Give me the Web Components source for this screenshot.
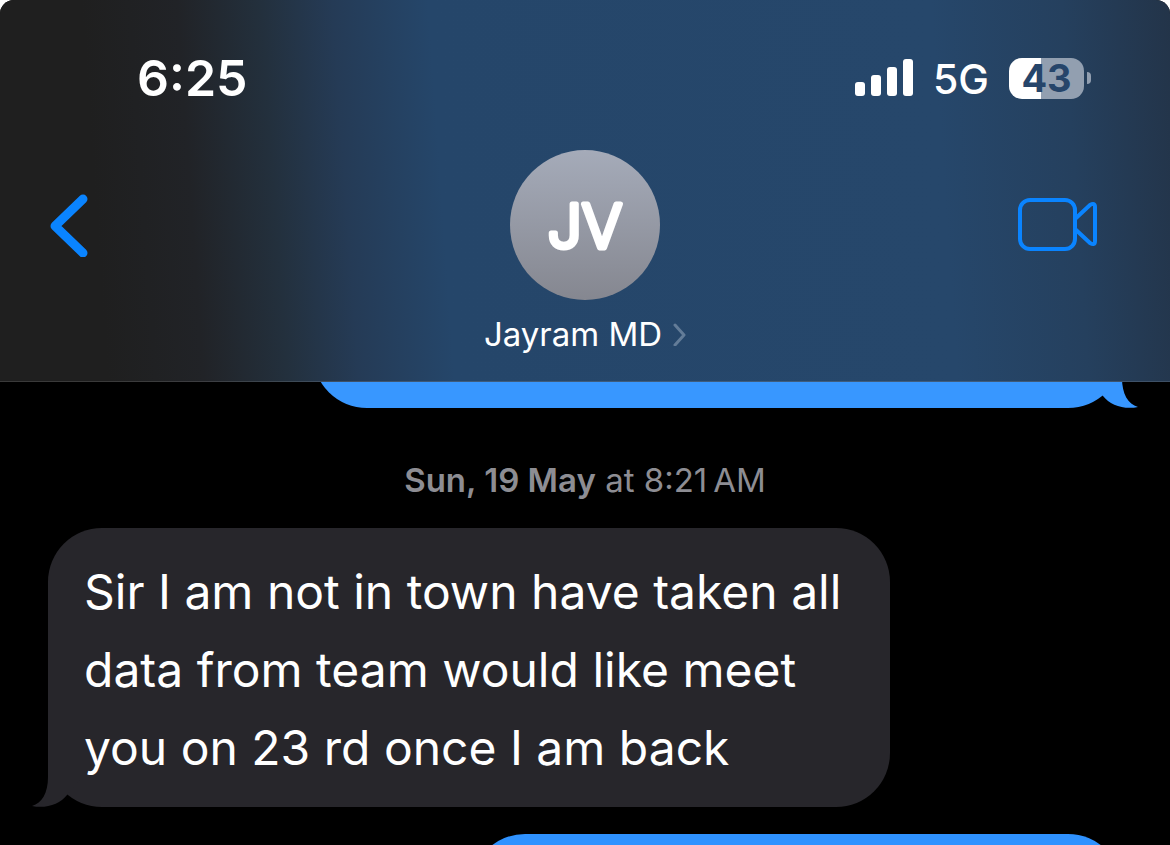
<!DOCTYPE html>
<html lang="en">
<head>
<meta charset="utf-8">
<meta name="viewport" content="width=device-width, initial-scale=1">
<title>Messages</title>
<style>
  body {
    margin: 0;
    background: white;
    font-family: Inter, "Liberation Sans", sans-serif;
    color: white;
  }
</style>
</head>
<body>
<chat-screen>
  <chat-header slot="header">
    <status-bar time="6:25" network="5G" battery="43"></status-bar>
    <contact-bar initials="JV" name="Jayram MD"></contact-bar>
  </chat-header>
  <chat-bubble class="first" kind="sent"></chat-bubble>
  <date-stamp><b>Sun, 19 May</b> at 8:21&#8239;AM</date-stamp>
  <chat-bubble kind="received">Sir I am not in town have taken all data from team would like meet you on 23 rd once I am back</chat-bubble>
  <chat-bubble class="last" kind="sent"></chat-bubble>
</chat-screen>

<script>
class ChatScreen extends HTMLElement {
  constructor() {
    super();
    this.attachShadow({ mode: 'open' });
    this.shadowRoot.innerHTML = `
      <style>
        :host {
          display: flex;
          flex-direction: column;
          height: 100vh;
          overflow: hidden;
          border-radius: 14px 14px 0 0;
          background: black;
        }

        .thread {
          display: flex;
          flex-direction: column;
          flex: 1;
          min-height: 0;
          padding: 0 48px;
        }

        ::slotted(chat-bubble) {
          flex-shrink: 0;
          box-sizing: border-box;
        }

        /* scrolled halfway under the header */
        ::slotted(.first) {
          width: 809px;
          height: 120px;
          margin-top: -94px;
          --sent: #3897ff;
        }

        ::slotted(date-stamp) { margin: 50px 0 26px; }

        ::slotted(.last) {
          width: 651px;
          height: 120px;
          margin-top: 27px;
        }
      </style>
      <slot name="header"></slot>
      <main class="thread"><slot></slot></main>
    `;
  }
}

class ChatHeader extends HTMLElement {
  constructor() {
    super();
    this.attachShadow({ mode: 'open' });
    this.shadowRoot.innerHTML = `
      <style>
        :host {
          display: block;
          position: relative;
          z-index: 1;
          flex-shrink: 0;
          padding-bottom: 25px;
          border-bottom: 1px solid rgba(255, 255, 255, .12);
          background: linear-gradient(86deg, #1f1f1f 9%, #212327 17%, #23303d 24%, #253b56 30%, #25466a 38%, #26476b 80%, #25405e 91%, #233449 100%);
          background-origin: border-box;
        }
      </style>
      <slot></slot>
    `;
  }
}

class StatusBar extends HTMLElement {
  constructor() {
    super();
    this.attachShadow({ mode: 'open' });
    this.shadowRoot.innerHTML = `
      <style>
        :host {
          display: flex;
          align-items: center;
          justify-content: space-between;
          padding: 48px 79px 0 137px;
          height: 60px;
        }

        .time {
          font-size: 50px;
          font-weight: 600;
        }

        .right {
          display: flex;
          align-items: center;
          gap: 20px;
        }

        .network {
          font-size: 41px;
          font-weight: 500;
          line-height: 60px;
          padding-top: 2px;
        }

        .battery {
          display: flex;
          align-items: center;
          gap: 3px;
        }

        .level {
          width: 75px;
          border-radius: 13px;
          background: linear-gradient(90deg, white 32px, #929fb0 32px);
          color: #26456a;
          font-size: 38px;
          font-weight: 700;
          line-height: 41px;
          text-align: center;
        }

        .nub {
          width: 4px;
          height: 12px;
          border-radius: 0 6px 6px 0;
          background: #929fb0;
        }
      </style>
      <span class="time"></span>
      <div class="right">
        <svg width="58" height="40" viewBox="0 0 58 40" fill="white" aria-hidden="true">
          <rect x="0" y="24" width="10" height="14" rx="3"/>
          <rect x="16" y="17" width="10" height="21" rx="3"/>
          <rect x="32" y="9" width="10" height="29" rx="3"/>
          <rect x="48" y="1" width="10" height="37" rx="3"/>
        </svg>
        <span class="network"></span>
        <div class="battery"><span class="level"></span><span class="nub"></span></div>
      </div>
    `;
  }

  connectedCallback() {
    this.shadowRoot.querySelector('.time').textContent = this.getAttribute('time');
    this.shadowRoot.querySelector('.network').textContent = this.getAttribute('network');
    this.shadowRoot.querySelector('.level').textContent = this.getAttribute('battery');
  }
}

class ContactBar extends HTMLElement {
  constructor() {
    super();
    this.attachShadow({ mode: 'open' });
    this.shadowRoot.innerHTML = `
      <style>
        :host {
          display: grid;
          grid-template-columns: 1fr auto 1fr;
          align-items: start;
          margin-top: 42px;
          padding: 0 48px;
        }

        button {
          display: flex;
          align-items: center;
          padding: 0;
          border: 0;
          background: none;
          color: white;
          font: inherit;
        }

        svg {
          display: block;
          fill: none;
          stroke: #0a84ff;
          stroke-linecap: round;
          stroke-linejoin: round;
        }

        .back, .video { height: 150px; }

        .video {
          justify-self: end;
          margin-right: 24px;
        }

        .contact {
          flex-direction: column;
          gap: 12px;
        }

        .avatar {
          width: 150px;
          height: 150px;
          border-radius: 50%;
          background: linear-gradient(#a5abb9, #858790);
        }

        .avatar text {
          fill: white;
          stroke: white;
          stroke-width: 5px;
          font-size: 60px;
          font-weight: 300;
          text-anchor: middle;
        }

        .name {
          display: flex;
          align-items: center;
          gap: 11px;
          font-size: 33px;
          line-height: 44px;
        }

        .name svg { stroke: #637c98; }
      </style>
      <button class="back" aria-label="Back">
        <svg width="40" height="64" viewBox="0 0 40 64" stroke-width="9"><path d="M35 6 7 33 35 60"/></svg>
      </button>
      <button class="contact">
        <svg class="avatar" viewBox="0 0 150 150"><text x="75" y="98"></text></svg>
        <span class="name">
          <span class="label"></span>
          <svg width="13" height="24" viewBox="0 0 13 24" stroke-width="3"><path d="M2 3 11 13 2 23"/></svg>
        </span>
      </button>
      <button class="video" aria-label="Video call">
        <svg width="80" height="54" viewBox="0 0 80 54" stroke-width="4">
          <rect x="2" y="2" width="55" height="49" rx="10"/>
          <path d="M57 21 72 7Q77 4 77 9V43Q77 48 72 45L57 31"/>
        </svg>
      </button>
    `;
  }

  connectedCallback() {
    this.shadowRoot.querySelector('text').textContent = this.getAttribute('initials');
    this.shadowRoot.querySelector('.label').textContent = this.getAttribute('name');
  }
}

class DateStamp extends HTMLElement {
  constructor() {
    super();
    this.attachShadow({ mode: 'open' });
    this.shadowRoot.innerHTML = `
      <style>
        :host {
          display: block;
          color: #8d8d93;
          font-size: 33px;
          line-height: 44px;
          text-align: center;
        }

        ::slotted(b) { font-weight: 600; }
      </style>
      <slot></slot>
    `;
  }
}

class ChatBubble extends HTMLElement {
  constructor() {
    super();
    this.attachShadow({ mode: 'open' });
    this.shadowRoot.innerHTML = `
      <style>
        :host {
          display: block;
          position: relative;
          align-self: flex-start;
          max-width: 842px;
          padding: 25px 36px 20px;
          border-radius: 54px;
          background: var(--bubble);
          font-size: 48px;
          line-height: 78px;
          --bubble: #27262b;
        }

        :host([kind="sent"]) {
          align-self: flex-end;
          --bubble: var(--sent, #2f92ff);
        }

        .tail {
          position: absolute;
          left: -16px;
          bottom: 0;
          fill: var(--bubble);
        }

        :host([kind="sent"]) .tail {
          left: auto;
          right: -16px;
          transform: scaleX(-1);
        }
      </style>
      <slot></slot>
      <svg class="tail" width="54" height="54" viewBox="0 0 54 54" aria-hidden="true">
        <path d="M16 0V24C16 40 10 50 0 53C14 56 28 51 35 42L54 20V0Z"/>
      </svg>
    `;
  }
}

window.customElements.define('chat-screen', ChatScreen);
window.customElements.define('chat-header', ChatHeader);
window.customElements.define('status-bar', StatusBar);
window.customElements.define('contact-bar', ContactBar);
window.customElements.define('date-stamp', DateStamp);
window.customElements.define('chat-bubble', ChatBubble);
</script>
</body>
</html>
